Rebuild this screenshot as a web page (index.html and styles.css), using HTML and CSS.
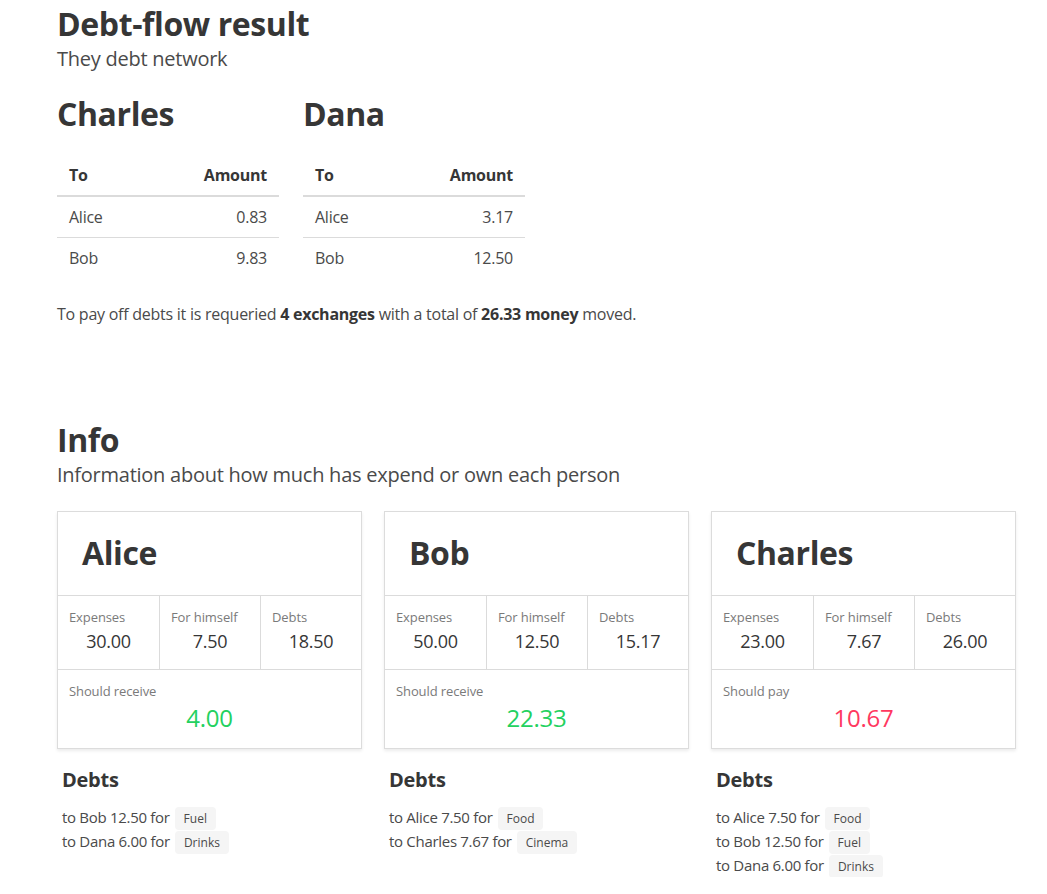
FILE: index.html
```html
<!DOCTYPE html>
<html lang="en">
<head>
<meta charset="utf-8">
<title>Debt-flow result</title>
<link rel="stylesheet" href="styles.css">
</head>
<body>
<main class="page">
  <section class="result">
    <h1 class="title">Debt-flow result</h1>
    <p class="subtitle">They debt network</p>

    <div class="debtors">
      <div class="debtor">
        <h2 class="title">Charles</h2>
        <table class="flow">
          <thead>
            <tr><th class="to">To</th><th class="amount">Amount</th></tr>
          </thead>
          <tbody>
            <tr><td class="to">Alice</td><td class="amount">0.83</td></tr>
            <tr><td class="to">Bob</td><td class="amount">9.83</td></tr>
          </tbody>
        </table>
      </div>
      <div class="debtor">
        <h2 class="title">Dana</h2>
        <table class="flow">
          <thead>
            <tr><th class="to">To</th><th class="amount">Amount</th></tr>
          </thead>
          <tbody>
            <tr><td class="to">Alice</td><td class="amount">3.17</td></tr>
            <tr><td class="to">Bob</td><td class="amount">12.50</td></tr>
          </tbody>
        </table>
      </div>
    </div>

    <p class="summary">To pay off debts it is requeried <strong>4 exchanges</strong> with a total of <strong>26.33 money</strong> moved.</p>
  </section>

  <section class="info">
    <h1 class="title">Info</h1>
    <p class="subtitle">Information about how much has expend or own each person</p>

    <div class="people">
      <div class="person">
        <div class="card">
          <div class="card-head"><h2 class="title">Alice</h2></div>
          <div class="stats">
            <div class="stat"><div class="label">Expenses</div><div class="value">30.00</div></div>
            <div class="stat"><div class="label">For himself</div><div class="value">7.50</div></div>
            <div class="stat"><div class="label">Debts</div><div class="value">18.50</div></div>
          </div>
          <div class="balance">
            <div class="label">Should receive</div>
            <div class="value big positive">4.00</div>
          </div>
        </div>
        <div class="debts">
          <h3 class="debts-title">Debts</h3>
          <div class="debt"><span>to Bob 12.50 for</span><span class="tag">Fuel</span></div>
          <div class="debt"><span>to Dana 6.00 for</span><span class="tag">Drinks</span></div>
        </div>
      </div>

      <div class="person">
        <div class="card">
          <div class="card-head"><h2 class="title">Bob</h2></div>
          <div class="stats">
            <div class="stat"><div class="label">Expenses</div><div class="value">50.00</div></div>
            <div class="stat"><div class="label">For himself</div><div class="value">12.50</div></div>
            <div class="stat"><div class="label">Debts</div><div class="value">15.17</div></div>
          </div>
          <div class="balance">
            <div class="label">Should receive</div>
            <div class="value big positive">22.33</div>
          </div>
        </div>
        <div class="debts">
          <h3 class="debts-title">Debts</h3>
          <div class="debt"><span>to Alice 7.50 for</span><span class="tag">Food</span></div>
          <div class="debt"><span>to Charles 7.67 for</span><span class="tag">Cinema</span></div>
        </div>
      </div>

      <div class="person">
        <div class="card">
          <div class="card-head"><h2 class="title">Charles</h2></div>
          <div class="stats">
            <div class="stat"><div class="label">Expenses</div><div class="value">23.00</div></div>
            <div class="stat"><div class="label">For himself</div><div class="value">7.67</div></div>
            <div class="stat"><div class="label">Debts</div><div class="value">26.00</div></div>
          </div>
          <div class="balance">
            <div class="label">Should pay</div>
            <div class="value big negative">10.67</div>
          </div>
        </div>
        <div class="debts">
          <h3 class="debts-title">Debts</h3>
          <div class="debt"><span>to Alice 7.50 for</span><span class="tag">Food</span></div>
          <div class="debt"><span>to Bob 12.50 for</span><span class="tag">Fuel</span></div>
          <div class="debt"><span>to Dana 6.00 for</span><span class="tag">Drinks</span></div>
        </div>
      </div>
    </div>
  </section>
</main>
</body>
</html>
```

FILE: styles.css
```css
* {
  box-sizing: border-box;
}

html, body {
  margin: 0;
  padding: 0;
  background: #ffffff;
}

body {
  font-family: "Open Sans", "Noto Sans", "DejaVu Sans", sans-serif;
  font-size: 16px;
  line-height: 24px;
  letter-spacing: -0.25px;
  color: #4a4a4a;
}

.page {
  width: 960px;
  margin-left: 57px;
  padding-top: 6px;
}

.title {
  margin: 0;
  font-size: 32px;
  line-height: 36px;
  font-weight: 700;
  letter-spacing: -0.4px;
  color: #363636;
}

.subtitle {
  margin: 4px 0 0;
  font-size: 20px;
  line-height: 25px;
  color: #4a4a4a;
}

.debtors {
  display: flex;
  gap: 24px;
  margin-top: 25px;
}

.debtor {
  width: 222px;
}

.flow {
  width: 100%;
  margin-top: 23px;
  border-collapse: collapse;
  border-spacing: 0;
}

.flow th,
.flow td {
  padding: 8px 12px;
  line-height: 24px;
  text-align: left;
  vertical-align: top;
}

.flow th {
  font-weight: 700;
  color: #363636;
  border-bottom: 2px solid #dbdbdb;
}

.flow td {
  border-bottom: 1px solid #dbdbdb;
}

.flow tbody tr:last-child td {
  border-bottom: 0;
}

.flow .amount {
  text-align: right;
}

.summary {
  margin: 24px 0 0;
}

.summary strong {
  font-weight: 700;
  color: #363636;
}

.info {
  margin-top: 96px;
}

.people {
  display: grid;
  grid-template-columns: repeat(3, 305px);
  column-gap: 22px;
  margin-top: 24px;
}

.card {
  border: 1px solid #dcdcdc;
  box-shadow: 0 2px 3px rgba(10, 10, 10, 0.08);
  background: #ffffff;
}

.card-head {
  padding: 23px 24px 24px;
  border-bottom: 1px solid #dbdbdb;
}

.stats {
  display: grid;
  grid-template-columns: 1fr 1fr 1fr;
  border-bottom: 1px solid #dbdbdb;
}

.stat {
  padding: 12px 11px 16px;
}

.stat + .stat {
  border-left: 1px solid #dbdbdb;
}

.label {
  font-size: 13px;
  line-height: 18px;
  letter-spacing: -0.1px;
  color: #7a7a7a;
}

.value {
  margin-top: 3px;
  font-size: 18px;
  line-height: 24px;
  color: #363636;
  text-align: center;
}

.balance {
  padding: 12px 11px 15px;
}

.value.big {
  margin-top: 3px;
  font-size: 24px;
  line-height: 30px;
}

.positive {
  color: #23d160;
}

.negative {
  color: #ff3860;
}

.debts {
  padding-left: 5px;
  margin-top: 18px;
}

.debts-title {
  margin: 0 0 13px;
  font-size: 20px;
  line-height: 25px;
  font-weight: 700;
  color: #363636;
}

.debt {
  display: flex;
  align-items: flex-start;
  gap: 5px;
  height: 24px;
  font-size: 15px;
  line-height: 24px;
  letter-spacing: -0.3px;
}

.tag {
  display: inline-flex;
  align-items: center;
  height: 23px;
  margin-top: 2px;
  padding: 0 9px;
  border-radius: 4px;
  background: #f5f5f5;
  color: #4a4a4a;
  font-size: 12px;
  line-height: 1;
  letter-spacing: 0;
}
```
